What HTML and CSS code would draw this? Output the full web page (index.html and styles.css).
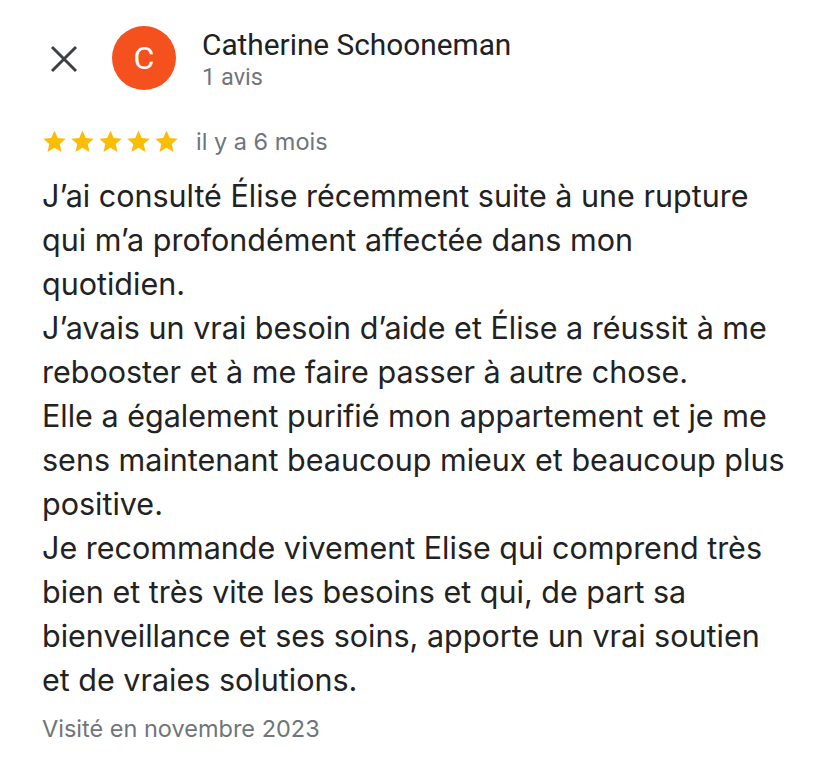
FILE: index.html
```html
<!DOCTYPE html>
<html lang="fr">
<head>
<meta charset="utf-8">
<title>Avis</title>
<link rel="stylesheet" href="styles.css">
</head>
<body>
<div class="card">
  <header class="head">
    <svg class="close" width="28" height="28" viewBox="0 0 28 28" aria-hidden="true">
      <path d="M2 2 L26 26 M26 2 L2 26" stroke="#3c4043" stroke-width="3" stroke-linecap="butt"/>
    </svg>
    <div class="avatar">C</div>
    <div class="who">
      <div class="name">Catherine Schooneman</div>
      <div class="count">1 avis</div>
    </div>
  </header>
  <div class="meta">
    <div class="stars">
      <svg viewBox="0 0 24 24" class="star"><path d="M12 1.5l3.1 7.1 7.7.7-5.8 5.1 1.7 7.6L12 18l-6.7 4 1.7-7.6-5.8-5.1 7.7-.7z"/></svg>
      <svg viewBox="0 0 24 24" class="star"><path d="M12 1.5l3.1 7.1 7.7.7-5.8 5.1 1.7 7.6L12 18l-6.7 4 1.7-7.6-5.8-5.1 7.7-.7z"/></svg>
      <svg viewBox="0 0 24 24" class="star"><path d="M12 1.5l3.1 7.1 7.7.7-5.8 5.1 1.7 7.6L12 18l-6.7 4 1.7-7.6-5.8-5.1 7.7-.7z"/></svg>
      <svg viewBox="0 0 24 24" class="star"><path d="M12 1.5l3.1 7.1 7.7.7-5.8 5.1 1.7 7.6L12 18l-6.7 4 1.7-7.6-5.8-5.1 7.7-.7z"/></svg>
      <svg viewBox="0 0 24 24" class="star"><path d="M12 1.5l3.1 7.1 7.7.7-5.8 5.1 1.7 7.6L12 18l-6.7 4 1.7-7.6-5.8-5.1 7.7-.7z"/></svg>
    </div>
    <span class="when">il y a 6 mois</span>
  </div>
  <p class="text">J’ai consulté Élise récemment suite à une rupture<br>qui m’a profondément affectée dans mon<br>quotidien.<br>J’avais un vrai besoin d’aide et Élise a réussit à me<br>rebooster et à me faire passer à autre chose.<br>Elle a également purifié mon appartement et je me<br>sens maintenant beaucoup mieux et beaucoup plus<br>positive.<br>Je recommande vivement Elise qui comprend très<br>bien et très vite les besoins et qui, de part sa<br>bienveillance et ses soins, apporte un vrai soutien<br>et de vraies solutions.</p>
  <div class="visited">Visité en novembre 2023</div>
</div>
</body>
</html>
```
FILE: styles.css
```css
html, body {
  margin: 0;
  padding: 0;
  background: #161616;
  height: 100%;
  overflow: hidden;
}
body {
  padding-top: 1px;
  box-sizing: border-box;
}
.card {
  background: #ffffff;
  margin: -21px -6px 0 -3px;
  padding: 48px 0 0 45px;
  height: 820px;
  border-radius: 30px;
  font-family: "Inter", "Roboto", sans-serif;
}
.head {
  display: flex;
  align-items: flex-start;
}
.close {
  margin: 17px 0 0 8px;
  flex: none;
}
.avatar {
  width: 64px;
  height: 64px;
  border-radius: 50%;
  background: #f4511e;
  color: #fff;
  font-family: "Roboto", sans-serif;
  font-size: 32px;
  display: flex;
  align-items: center;
  justify-content: center;
  margin: -2px 0 0 34px;
  flex: none;
}
.who {
  margin-left: 26px;
  font-family: "Roboto", sans-serif;
}
.name {
  font-size: 29.8px;
  color: #202124;
  line-height: 34px;
}
.count {
  font-size: 23.5px;
  color: #70757a;
  line-height: 30px;
}
.meta {
  display: flex;
  align-items: center;
  margin-top: 34px;
  height: 30px;
}
.stars {
  display: flex;
  gap: 3px;
}
.star {
  width: 25px;
  height: 25px;
  fill: #fbbc04;
}
.when {
  margin-left: 17px;
  font-size: 23.5px;
  color: #70757a;
}
.text {
  margin: 18px 0 0 0;
  font-size: 30.5px;
  line-height: 44px;
  color: #222222;
}
.visited {
  margin-top: 12px;
  font-size: 23.5px;
  line-height: 30px;
  color: #70757a;
}
```
